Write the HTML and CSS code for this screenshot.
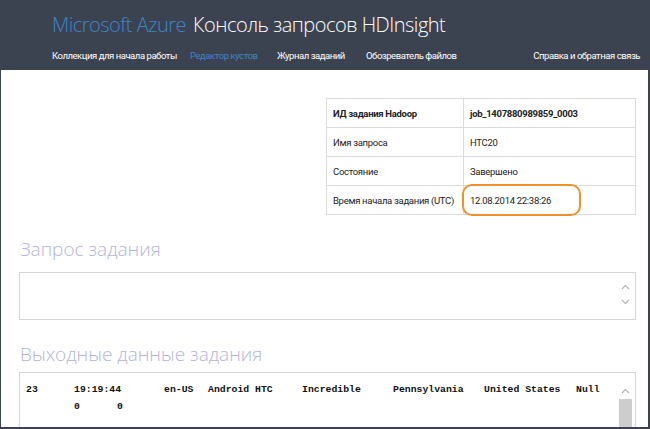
FILE: index.html
```html
<!DOCTYPE html>
<html lang="ru">
<head>
<meta charset="utf-8">
<link rel="stylesheet" href="styles.css">
</head>
<body>
<header class="top">
  <div class="brand"><span class="azure">Microsoft Azure</span><span class="title">Консоль запросов HDInsight</span></div>
  <nav class="nav">
    <a class="nav-item">Коллекция для начала работы</a>
    <a class="nav-item active">Редактор кустов</a>
    <a class="nav-item">Журнал заданий</a>
    <a class="nav-item">Обозреватель файлов</a>
    <a class="nav-item help">Справка и обратная связь</a>
  </nav>
</header>
<main class="content">
  <div class="info-wrap">
    <table class="info">
      <tr><th>ИД задания Hadoop</th><th>job_1407880989859_0003</th></tr>
      <tr><td>Имя запроса</td><td>HTC20</td></tr>
      <tr><td>Состояние</td><td>Завершено</td></tr>
      <tr><td>Время начала задания (UTC)</td><td class="hl"><span class="ring"></span>12.08.2014 22:38:26</td></tr>
    </table>
  </div>
  <h2 class="section">Запрос задания</h2>
  <div class="query-box">
    <div class="arrows">
      <svg width="9" height="6" viewBox="0 0 9 6"><path d="M1 5 L4.5 1.5 L8 5" fill="none" stroke="#b5b5b5" stroke-width="1.2"/></svg>
      <svg width="9" height="6" viewBox="0 0 9 6"><path d="M1 1 L4.5 4.5 L8 1" fill="none" stroke="#b5b5b5" stroke-width="1.2"/></svg>
    </div>
  </div>
  <h2 class="section out">Выходные данные задания</h2>
  <div class="output-box">
    <div class="output">
      <div class="line"><span class="c0">23</span><span class="c1">19:19:44</span><span class="c2">en-US</span><span class="c3">Android HTC</span><span class="c4">Incredible</span><span class="c5">Pennsylvania</span><span class="c6">United States</span><span>Null</span></div>
      <div class="line"><span class="c0"></span><span class="z1">0</span><span>0</span></div>
    </div>
    <div class="scroll">
      <svg class="up" width="9" height="6" viewBox="0 0 9 6"><path d="M1 5 L4.5 1.5 L8 5" fill="none" stroke="#b5b5b5" stroke-width="1.2"/></svg>
      <div class="track"><div class="thumb"></div></div>
    </div>
  </div>
</main>
</body>
</html>
```

FILE: styles.css
```css
html, body {
  margin: 0;
  padding: 0;
  height: 100%;
}
body {
  background: #3c4350;
  font-family: "Roboto", "Open Sans", sans-serif;
  overflow: hidden;
}
.top {
  height: 70px;
  padding-left: 52px;
  padding-right: 10px;
  box-sizing: border-box;
  color: #fff;
}
.brand {
  padding-top: 11px;
  height: 30px;
  font-family: "Open Sans", "Noto Sans", sans-serif;
  font-size: 20px;
  font-weight: 300;
  letter-spacing: -0.5px;
  white-space: nowrap;
}
.azure {
  color: #3c84c8;
  margin-right: 7px;
}
.title {
  color: #fff;
}
.nav {
  display: flex;
  margin-top: 9px;
  font-size: 9.5px;
  letter-spacing: -0.45px;
  white-space: nowrap;
}
.nav-item {
  color: #fff;
}
.nav-item:nth-child(1) { width: 138px; }
.nav-item:nth-child(2) { width: 87px; }
.nav-item:nth-child(3) { width: 89px; }
.nav-item.active {
  color: #3c84c8;
}
.nav-item.help {
  margin-left: auto;
}
.content {
  background: #fff;
  margin: 0 2px 0 1px;
  height: 357px;
  padding: 28px 12px 0 18px;
  box-sizing: border-box;
  overflow: hidden;
}
.info-wrap {
  display: flex;
  justify-content: flex-end;
}
.info {
  border-collapse: collapse;
  width: 310px;
  font-size: 9.5px;
  letter-spacing: -0.3px;
  color: #222;
  table-layout: fixed;
}
.info th, .info td {
  border: 1px solid #dcdcdc;
  height: 28px;
  padding: 0 6px;
  text-align: left;
  white-space: nowrap;
}
.info th {
  font-weight: 700;
}
.info tr > :first-child {
  width: 124px;
}
.hl {
  position: relative;
}
.ring {
  position: absolute;
  left: -2px;
  top: -2px;
  width: 115px;
  height: 28px;
  border: 2.5px solid #f0902c;
  border-radius: 10px;
}
.section {
  margin: 21px 0 0 1px;
  font-family: "Open Sans", "Noto Sans", sans-serif;
  font-size: 19px;
  font-weight: 300;
  color: #b4b4dc;
  height: 26px;
  line-height: 26px;
}
.section.out {
  margin-top: 21px;
}
.query-box {
  margin-top: 10px;
  height: 48px;
  border: 1px solid #d4d4d4;
  box-sizing: border-box;
  display: flex;
  justify-content: flex-end;
}
.arrows {
  width: 20px;
  display: flex;
  flex-direction: column;
  align-items: center;
  gap: 9px;
  padding-top: 11px;
}
.output-box {
  margin-top: 5px;
  height: 60px;
  border: 1px solid #d4d4d4;
  border-bottom: none;
  display: flex;
}
.output {
  flex: 1;
  padding: 8px 0 0 6px;
  font-family: "Liberation Mono", "DejaVu Sans Mono", monospace;
  font-weight: 700;
  font-size: 9.8px;
  line-height: 17px;
  color: #111;
  white-space: nowrap;
}
.line {
  display: flex;
}
.c0 { width: 48px; }
.c1 { width: 90px; }
.c2 { width: 44px; }
.c3 { width: 94px; }
.c4 { width: 91px; }
.c5 { width: 91px; }
.c6 { width: 92px; }
.z1 { width: 43px; }
.scroll {
  width: 15px;
  display: flex;
  flex-direction: column;
  align-items: center;
  margin-right: 2px;
}
.up {
  margin-top: 15px;
}
.track {
  margin-top: 5px;
  width: 13px;
  flex: 1;
  background: #f0f0f0;
}
.thumb {
  height: 100%;
  background: #cdcdcd;
}
```
